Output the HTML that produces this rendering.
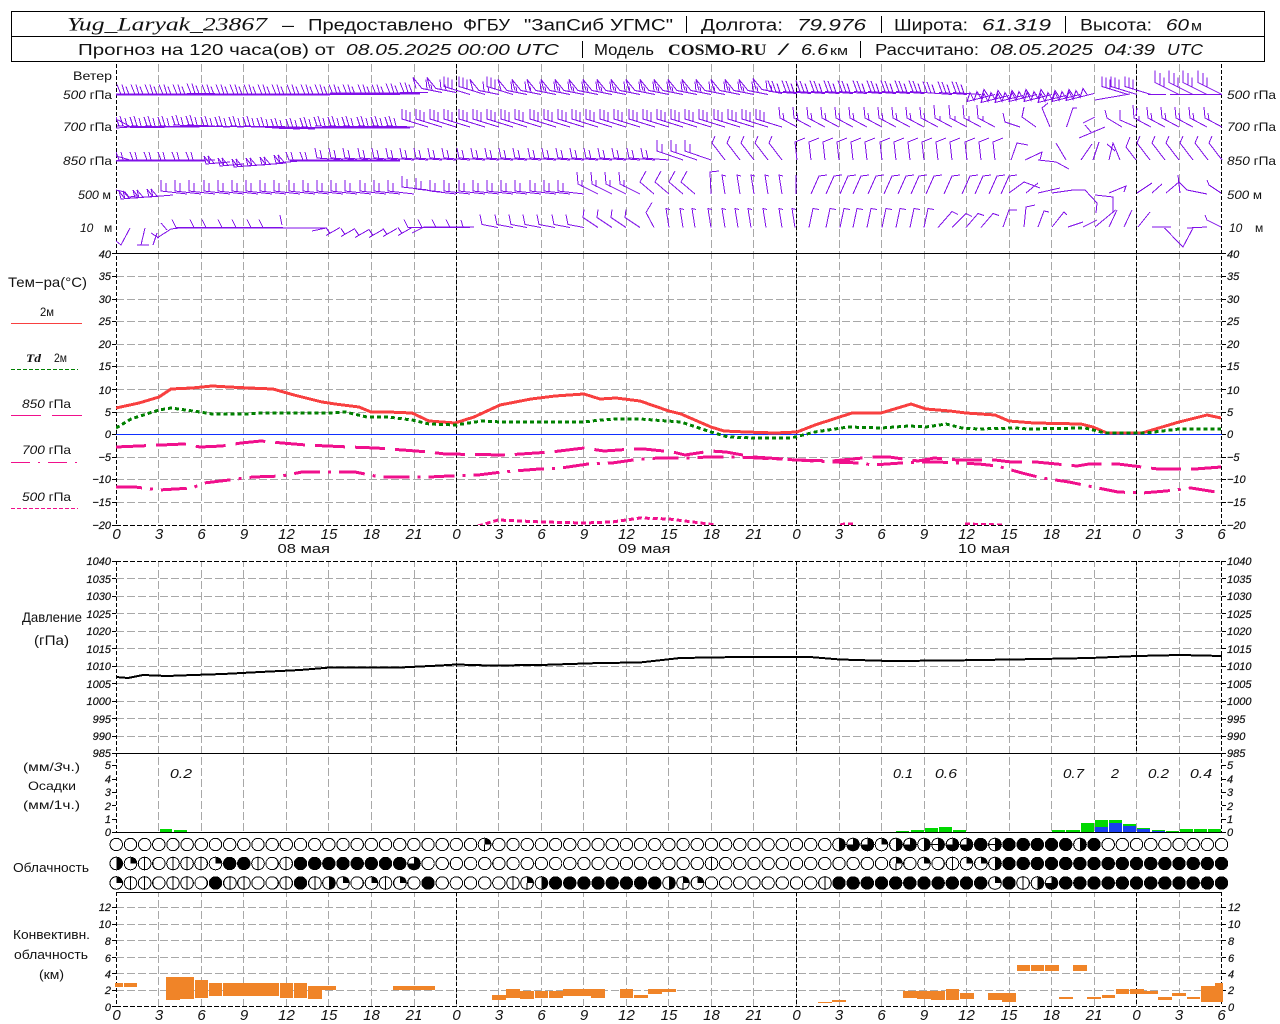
<!DOCTYPE html>
<html><head><meta charset="utf-8"><title>Yug_Laryak_23867</title>
<style>
html,body{margin:0;padding:0;background:#fff}
svg{display:block}
text{font-family:"Liberation Sans",sans-serif;fill:#111}
.i{font-style:italic}
.h1{font-size:17px}
.h2{font-size:16px}
.l{font-size:12px}
.b{font-size:14px}
.c{font-size:13px}
.a{font-size:11px;font-style:italic;text-anchor:end;stroke:#111;stroke-width:.2}
.r{font-size:11px;font-style:italic;stroke:#111;stroke-width:.2}
.x{font-size:15px;font-style:italic;text-anchor:middle;font-family:"Liberation Serif",serif}
.y{font-family:"Liberation Serif",serif;font-style:italic}
</style></head><body>
<svg width="1280" height="1024" viewBox="0 0 1280 1024" xmlns="http://www.w3.org/2000/svg" shape-rendering="crispEdges">
<defs>
<clipPath id="cw"><rect x="116" y="64" width="1107" height="189"/></clipPath>
<clipPath id="ct"><rect x="116" y="254" width="1107" height="271"/></clipPath>
<path id="a" d="M0 0H-28M-24 0l-4-10M-20 0l-3-10M-16 0l-3-8"/>
<path id="B" d="M0 0L-28-2M-25-2l-4-11M-21-1.500l-4-11M-17-1l-3-9"/>
<path id="A" d="M0 0L-28-1M-26-1l-3-9M-22-1l-3-10M-18-1l-2-8"/>
<path id="c" d="M0 0L-26-8v-10M-22-7v-10M-18-6v-9"/>
<path id="C" d="M0 0L-20-4-29-15-26-4M-15-3l-1-10M-10-2l-1-6"/>
<path id="r" d="M0 0L-28 7l3-9 4 8 3-9 4 7 3-9 4 6"/>
<path id="t" d="M0 0L-24-12v-12M-19-9.500v-12M-15-8v-9"/>
<path id="d" d="M0 0L-26-9v-11M-21-7v-9"/>
<path id="e" d="M0 0H-26l-3-8M-22 0l-2-8"/>
<path id="E" d="M0 0L-26-2l-2-10M-21-1l-2-9"/>
<path id="f" d="M0 0L-17-9-18-20M-13-7l-1-7"/>
<path id="F" d="M0 0L-17-9-18-22M-12-6v-5"/>
<path id="g" d="M0 0l-13-17 3-7"/>
<path id="h" d="M0 0l-2-18 10-4"/>
<path id="i" d="M0 0l8-18 8-1"/>
<path id="j" d="M0 0l-16-3-2-10"/>
<path id="J" d="M0 0l-15-10 1-8"/>
<path id="k" d="M0 0l-3-19 4 1"/>
<path id="L" d="M0 0l4-19 6 1"/>
<path id="n" d="M0 0l14-8M4-2l-4-6"/>
<path id="p" d="M0 0L-26-3v-11M-21-2v-9"/>
<path id="q" d="M0 0L-20-10l-1-12M-16-7v-7"/>
<path id="G" d="M0 0l-14-12 6-11"/>
<path id="s" d="M0 0H-20l-4-8"/>
<path id="w" d="M0 0L-24 2l-2-8 6 8-2-8 6 7"/>
<g id="v"><circle r="6.300" fill="#fff" stroke="#000"/><path d="M0-6V6" stroke="#000"/></g>
<g id="H"><circle r="6.300" fill="#fff" stroke="#000"/><path d="M0-6A6 6 0 0 1 0 6Z"/></g>
<g id="Q"><circle r="6.300" fill="#fff" stroke="#000"/><path d="M0 0V-6A6 6 0 0 1 6 0Z"/></g>
<g id="V"><circle r="6.300" fill="#fff" stroke="#000"/><path d="M0 0V-6A6 6 0 0 1 6 0Z"/><path d="M0 0V6" stroke="#000"/></g>
<g id="T"><circle r="6.300" fill="#fff" stroke="#000"/><path d="M0 0V-6A6 6 0 1 1-6 0Z"/></g>
<g id="S"><circle r="6.300" fill="#fff" stroke="#000"/><path d="M0-6A6 6 0 0 1 0 6Z"/><path d="M-6 0H0" stroke="#000"/></g>
</defs>
<rect width="1280" height="1024" fill="#fff"/>

<!-- header -->
<path d="M11.500 11.500H1264.500V61.500H11.500ZM11.500 36.500H1264.500" fill="none" stroke="#000"/>
<g class="h1">
<text x="67" y="30.500" class="y" textLength="200" lengthAdjust="spacingAndGlyphs" style="font-size:19px">Yug_Laryak_23867</text>
<text x="282" y="30.500" textLength="12" lengthAdjust="spacingAndGlyphs">—</text>
<text x="308" y="30.500" textLength="145" lengthAdjust="spacingAndGlyphs">Предоставлено</text>
<text x="463" y="30.500" textLength="47" lengthAdjust="spacingAndGlyphs">ФГБУ</text>
<text x="524" y="30.500" textLength="80" lengthAdjust="spacingAndGlyphs">"ЗапСиб</text>
<text x="610" y="30.500" textLength="63" lengthAdjust="spacingAndGlyphs">УГМС"</text>
<text x="701" y="30.500" textLength="82" lengthAdjust="spacingAndGlyphs">Долгота:</text>
<text x="797" y="30.500" class="i" textLength="69" lengthAdjust="spacingAndGlyphs">79.976</text>
<text x="894" y="30.500" textLength="74" lengthAdjust="spacingAndGlyphs">Широта:</text>
<text x="982" y="30.500" class="i" textLength="69" lengthAdjust="spacingAndGlyphs">61.319</text>
<text x="1080" y="30.500" textLength="72" lengthAdjust="spacingAndGlyphs">Высота:</text>
<text x="1166" y="30.500" class="i" textLength="23" lengthAdjust="spacingAndGlyphs">60</text>
<text x="1191" y="30.500" textLength="11" lengthAdjust="spacingAndGlyphs" style="font-size:14px">м</text>
</g>
<path d="M686.500 16V33M881.500 16V33M1065.500 16V33M582.500 41V58M860.500 41V58" stroke="#000"/>
<g class="h2">
<text x="78" y="55" textLength="257" lengthAdjust="spacingAndGlyphs">Прогноз на 120 часа(ов) от</text>
<text x="346" y="55" class="i" textLength="213" lengthAdjust="spacingAndGlyphs">08.05.2025 00:00 UTC</text>
<text x="594" y="55" textLength="60" lengthAdjust="spacingAndGlyphs">Модель</text>
<text x="668" y="55" textLength="98.500" lengthAdjust="spacingAndGlyphs" style="font-family:'Liberation Serif',serif;font-weight:bold">COSMO-RU</text>
<text x="779" y="55" class="i" textLength="8" lengthAdjust="spacingAndGlyphs">/</text>
<text x="801" y="55" class="i" textLength="27" lengthAdjust="spacingAndGlyphs">6.6</text>
<text x="830" y="55" textLength="18" lengthAdjust="spacingAndGlyphs" style="font-size:13px">км</text>
<text x="875" y="55" textLength="104" lengthAdjust="spacingAndGlyphs">Рассчитано:</text>
<text x="990" y="55" class="i" textLength="103" lengthAdjust="spacingAndGlyphs">08.05.2025</text>
<text x="1104" y="55" class="i" textLength="51" lengthAdjust="spacingAndGlyphs">04:39</text>
<text x="1167" y="55" class="i" textLength="36" lengthAdjust="spacingAndGlyphs">UTC</text>
</g>

<!-- vertical grid -->
<path d="M158.500 64V1006M201.500 64V1006M243.500 64V1006M286.500 64V1006M328.500 64V1006M371.500 64V1006M414.500 64V1006M456.500 64V1006M498.500 64V1006M541.500 64V1006M583.500 64V1006M626.500 64V1006M668.500 64V1006M711.500 64V1006M753.500 64V1006M796.500 64V1006M839.500 64V1006M881.500 64V1006M924.500 64V1006M966.500 64V1006M1009.500 64V1006M1051.500 64V1006M1094.500 64V1006M1136.500 64V1006M1179.500 64V1006" stroke="#a8a8a8" stroke-dasharray="8 3" fill="none"/>
<!-- horizontal grid -->
<path d="M116 276.500H1222M116 299.500H1222M116 321.500H1222M116 344.500H1222M116 366.500H1222M116 389.500H1222M116 412.500H1222M116 457.500H1222M116 479.500H1222M116 502.500H1222M116 578.500H1222M116 596.500H1222M116 613.500H1222M116 631.500H1222M116 648.500H1222M116 666.500H1222M116 683.500H1222M116 701.500H1222M116 718.500H1222M116 736.500H1222M116 907.500H1222M116 924.500H1222M116 940.500H1222M116 957.500H1222M116 973.500H1222M116 990.500H1222" stroke="#a8a8a8" stroke-dasharray="8 3" fill="none"/>
<rect x="100" y="526" width="1140" height="35" fill="#fff"/>
<rect x="100" y="833" width="1140" height="59" fill="#fff"/>
<!-- black dashed axes -->
<path d="M116.500 64V525M116.500 561V832M116.500 892V1006M1221.500 64V525M1221.500 561V832M1221.500 892V1006M456.500 64V525M456.500 561V753M456.500 892V1006M796.500 64V525M796.500 561V753M796.500 892V1006M1136.500 64V525M1136.500 561V753M1136.500 892V1006" stroke="#000" stroke-dasharray="4 2" fill="none"/>
<path d="M116 253.500H1222M116 753.500H1222M116 832.500H1222M116 892.500H1222" stroke="#000" fill="none"/>
<path d="M116 525.500H1222M116 561.500H1222M116 1006.500H1222" stroke="#000" stroke-dasharray="5 2" fill="none"/>
<!-- ticks -->
<path d="M112 253.500h4M112 276.500h4M112 299.500h4M112 321.500h4M112 344.500h4M112 366.500h4M112 389.500h4M112 412.500h4M112 434.500h4M112 457.500h4M112 479.500h4M112 502.500h4M112 525.500h4M112 561.500h4M112 578.500h4M112 596.500h4M112 613.500h4M112 631.500h4M112 648.500h4M112 666.500h4M112 683.500h4M112 701.500h4M112 718.500h4M112 736.500h4M112 753.500h4M112 765.500h4M112 779.500h4M112 792.500h4M112 805.500h4M112 819.500h4M112 832.500h4M112 907.500h4M112 924.500h4M112 940.500h4M112 957.500h4M112 973.500h4M112 990.500h4M112 1006.500h4M1222 253.500h4M1222 276.500h4M1222 299.500h4M1222 321.500h4M1222 344.500h4M1222 366.500h4M1222 389.500h4M1222 412.500h4M1222 434.500h4M1222 457.500h4M1222 479.500h4M1222 502.500h4M1222 525.500h4M1222 561.500h4M1222 578.500h4M1222 596.500h4M1222 613.500h4M1222 631.500h4M1222 648.500h4M1222 666.500h4M1222 683.500h4M1222 701.500h4M1222 718.500h4M1222 736.500h4M1222 753.500h4M1222 765.500h4M1222 779.500h4M1222 792.500h4M1222 805.500h4M1222 819.500h4M1222 832.500h4M1222 907.500h4M1222 924.500h4M1222 940.500h4M1222 957.500h4M1222 973.500h4M1222 990.500h4M1222 1006.500h4" stroke="#000"/>

<!-- wind barbs -->
<g clip-path="url(#cw)" fill="none" stroke="#8010e8">
<path d="M116 94.500H330M330 93.500H420" stroke-width="2"/>
<path d="M130 127.500L200 126.500H270L300 127.500H410M116 160.500H205M290 160.500H400" stroke-width="1.500"/>
<g transform="translate(0,94.500)">
<use href="#a" x="130"/><use href="#a" x="145"/><use href="#a" x="159"/><use href="#a" x="173"/><use href="#a" x="187"/><use href="#a" x="201"/><use href="#a" x="215" y="-1"/><use href="#a" x="230"/><use href="#a" x="244"/><use href="#a" x="258"/><use href="#a" x="272"/><use href="#a" x="286"/><use href="#a" x="300"/><use href="#a" x="315"/><use href="#a" x="329"/><use href="#a" x="343"/><use href="#a" x="357"/><use href="#a" x="371"/><use href="#a" x="386"/><use href="#a" x="400"/><use href="#a" x="414" y="-1"/><use href="#a" x="428" y="-2"/>
<use href="#C" x="442" y="-2"/><use href="#C" x="456" y="-2"/><use href="#c" x="470"/><use href="#c" x="485"/><use href="#C" x="499"/><use href="#c" x="513"/><use href="#C" x="527"/><use href="#C" x="541"/>
<use href="#C" x="556"/><use href="#C" x="570"/><use href="#C" x="584"/><use href="#C" x="598"/><use href="#C" x="612"/><use href="#C" x="626"/><use href="#C" x="640"/><use href="#C" x="655"/><use href="#C" x="669"/><use href="#C" x="683"/><use href="#C" x="697"/><use href="#C" x="711"/><use href="#C" x="725"/><use href="#C" x="740"/><use href="#C" x="754"/><use href="#C" x="768"/><use href="#C" x="782" y="-1"/>
<use href="#B" x="797" y="-1"/><use href="#B" x="811" y="-1"/><use href="#B" x="825" y="-1"/><use href="#B" x="839" y="-1"/><use href="#B" x="853" y="-1"/><use href="#B" x="867" y="-1"/><use href="#B" x="882" y="-1"/><use href="#B" x="896" y="-1"/><use href="#B" x="910" y="-1"/><use href="#B" x="924" y="-1"/><use href="#B" x="938" y="-1"/><use href="#B" x="952"/><use href="#B" x="967"/><use href="#B" x="981"/>
<use href="#r" x="995"/><use href="#r" x="1009" y="1"/><use href="#r" x="1023" y="1"/><use href="#r" x="1037"/><use href="#r" x="1052"/><use href="#r" x="1066" y="1"/><use href="#r" x="1080"/><use href="#r" x="1094" y="-1"/>
<use href="#c" x="1128"/><use href="#c" x="1137"/><use href="#c" x="1151"/>
<use href="#t" x="1179"/><use href="#t" x="1193"/><use href="#t" x="1207"/><use href="#t" x="1222"/>
</g>
<path d="M1095 100L1130 94M1148 94.500H1166M1170 94.500H1222"/>
<g transform="translate(0,127)">
<path d="M116 1l15-1 -13-7"/>
<use href="#A" x="145"/><use href="#A" x="159"/><use href="#A" x="173"/><use href="#A" x="187"/><use href="#A" x="201" y="-1"/><use href="#A" x="215" y="-1"/><use href="#A" x="230"/><use href="#A" x="244"/><use href="#A" x="258"/><use href="#A" x="272"/><use href="#A" x="286" y="1"/><use href="#A" x="300" y="2"/><use href="#A" x="315" y="2"/><use href="#A" x="329" y="1"/><use href="#A" x="343"/><use href="#A" x="357"/><use href="#A" x="371"/><use href="#A" x="386"/><use href="#A" x="400"/><use href="#A" x="414"/>
<use href="#c" x="428"/><use href="#c" x="442"/><use href="#c" x="456"/><use href="#c" x="470"/><use href="#c" x="485"/><use href="#c" x="499"/><use href="#c" x="513"/><use href="#c" x="527"/><use href="#c" x="541"/><use href="#c" x="556"/><use href="#c" x="570"/><use href="#c" x="584"/><use href="#c" x="598"/><use href="#c" x="612"/><use href="#c" x="626"/><use href="#c" x="640"/><use href="#c" x="655"/><use href="#c" x="669"/><use href="#c" x="683"/><use href="#c" x="697"/><use href="#c" x="711"/><use href="#c" x="725"/><use href="#c" x="740"/><use href="#c" x="754"/><use href="#c" x="768"/><use href="#c" x="782"/><use href="#f" x="797"/>
<use href="#f" x="811"/><use href="#f" x="825"/><use href="#f" x="839"/><use href="#f" x="853"/><use href="#f" x="867"/><use href="#f" x="882"/><use href="#f" x="896"/><use href="#f" x="910"/><use href="#f" x="924"/><use href="#f" x="938"/><use href="#F" x="952"/><use href="#F" x="967"/><use href="#F" x="981"/><use href="#F" x="995"/>
<use href="#F" x="1151"/><use href="#f" x="1165"/><use href="#f" x="1179"/><use href="#f" x="1193"/><use href="#f" x="1207"/><use href="#f" x="1222"/>
</g>
<path d="M1003 113l2 9 15 5M1024 107l-2 10 14 10M1048 103l-6 5 8 19M1066.500 127l6.500-19h4M1079 138l26-11M1095 117l-12 6M1091 132l-6-7M1105 110l2 8 15 9M1120 110v10l16 7M1137 108l-1 8"/>
<g transform="translate(0,160)">
<path d="M116 -4l14 4"/>
<use href="#e" x="145"/><use href="#e" x="159"/><use href="#e" x="173"/><use href="#e" x="187"/><use href="#e" x="201"/><use href="#e" x="215"/>
<use href="#w" x="230" y="2"/><use href="#w" x="244" y="4"/><use href="#w" x="258" y="5"/><use href="#w" x="272" y="4"/><use href="#w" x="286" y="3"/><use href="#w" x="300" y="1"/>
<use href="#e" x="315"/><use href="#e" x="329"/>
<use href="#E" x="343"/><use href="#E" x="357"/><use href="#E" x="371"/><use href="#E" x="386"/><use href="#E" x="400"/><use href="#E" x="414"/><use href="#E" x="428"/><use href="#E" x="442"/><use href="#E" x="456"/><use href="#E" x="470"/><use href="#E" x="485"/><use href="#E" x="499"/><use href="#E" x="513"/><use href="#E" x="527"/><use href="#E" x="541"/><use href="#E" x="556"/><use href="#E" x="570"/><use href="#E" x="584"/><use href="#E" x="598"/><use href="#E" x="612"/><use href="#E" x="626"/><use href="#E" x="640"/><use href="#E" x="655"/><use href="#E" x="669"/>
<use href="#d" x="683"/><use href="#d" x="697"/><use href="#d" x="711"/>
<use href="#g" x="725"/><use href="#g" x="740"/><use href="#g" x="754"/><use href="#g" x="768"/><use href="#g" x="782"/>
<use href="#h" x="797"/><use href="#h" x="811"/><use href="#h" x="825"/><use href="#h" x="839"/><use href="#h" x="853"/><use href="#h" x="867"/><use href="#h" x="882"/><use href="#h" x="896"/><use href="#h" x="910"/><use href="#h" x="924"/><use href="#h" x="938"/><use href="#h" x="952"/><use href="#h" x="967"/><use href="#h" x="981"/><use href="#h" x="995"/>
<use href="#g" x="1150"/><use href="#g" x="1165"/><use href="#g" x="1179"/><use href="#g" x="1193"/><use href="#g" x="1208"/><use href="#g" x="1222"/>
</g>
<path d="M1011 160l6-17 11 2M1025 160l17-8 -2 8M1038 160l18 2 13 7M1056 143l10 17M1081 160l11-16M1093 160l6-18M1109 160l4-17 7 17M1107 144l8 7M1136 160l-10-13 4-10"/>
<g transform="translate(0,194)">
<path d="M116-4l9 2 4 5 8-1"/>
<use href="#w" x="145" y="3"/><use href="#w" x="159" y="2"/><use href="#w" x="173" y="1"/>
<use href="#p" x="187"/><use href="#p" x="201"/><use href="#p" x="215"/><use href="#p" x="230"/><use href="#p" x="244"/><use href="#p" x="258"/><use href="#p" x="272"/><use href="#p" x="286"/><use href="#p" x="300"/><use href="#p" x="315"/><use href="#p" x="329"/><use href="#p" x="343"/><use href="#p" x="357"/><use href="#p" x="371"/><use href="#p" x="386"/><use href="#p" x="400"/><use href="#p" x="414"/><use href="#p" x="428" y="-4"/><use href="#p" x="442" y="-2"/><use href="#p" x="456"/><use href="#p" x="470"/><use href="#p" x="485"/><use href="#p" x="499"/><use href="#p" x="513"/><use href="#p" x="527"/><use href="#p" x="541"/><use href="#p" x="556"/><use href="#p" x="570"/><use href="#p" x="584"/>
<use href="#q" x="598"/><use href="#q" x="612"/><use href="#q" x="626"/><use href="#q" x="640"/>
<use href="#G" x="654"/><use href="#G" x="669"/><use href="#G" x="683"/><use href="#G" x="695"/>
<use href="#k" x="725"/><use href="#k" x="740"/><use href="#k" x="754"/><use href="#k" x="768"/><use href="#k" x="782"/>
<use href="#i" x="811"/><use href="#i" x="826"/><use href="#i" x="840"/><use href="#i" x="853"/><use href="#i" x="868"/><use href="#i" x="884"/><use href="#i" x="898"/><use href="#i" x="911"/><use href="#i" x="926"/><use href="#i" x="944"/><use href="#i" x="962"/><use href="#i" x="975"/><use href="#i" x="989"/><use href="#i" x="1001"/>
</g>
<path d="M711 194l-1-22 9-1M796 175v19M1009 193l15-11 16 6M1026 193l12-10M1038 193l22-5M1052 193l21-3h12l12 13-1 10M1095 195l18 2v16M1109 193l17-7-2 6M1137 193l15-10M1152 193l10-9M1166 193l13-11 8 8 20 4M1178 175l2 18M1207 180l2 5 12 8"/>
<g transform="translate(0,227.500)">
<use href="#s" x="196"/><use href="#s" x="214"/><use href="#s" x="226"/><use href="#s" x="242"/><use href="#s" x="256"/><use href="#s" x="271"/><use href="#s" x="283"/>
<use href="#n" x="326" y="8"/><use href="#n" x="341" y="9"/><use href="#n" x="355" y="10"/><use href="#n" x="369" y="10"/><use href="#n" x="383" y="9"/><use href="#n" x="398" y="8"/>
<use href="#s" x="428"/><use href="#s" x="442"/><use href="#s" x="456"/><use href="#s" x="470"/>
<use href="#j" x="498"/><use href="#j" x="513"/><use href="#j" x="527"/><use href="#j" x="541"/><use href="#j" x="555"/><use href="#j" x="570"/><use href="#j" x="584"/>
<use href="#J" x="598"/><use href="#J" x="612"/><use href="#J" x="626"/><use href="#J" x="640"/>
<path d="M654 0l-8-15 6-10"/>
<use href="#k" x="669"/><use href="#k" x="683"/><use href="#k" x="695"/><use href="#k" x="711"/><use href="#k" x="725"/><use href="#k" x="738"/><use href="#k" x="751"/><use href="#k" x="766"/><use href="#k" x="782"/><use href="#k" x="795"/>
<use href="#L" x="809"/><use href="#L" x="826"/><use href="#L" x="840"/><use href="#L" x="853"/><use href="#L" x="867"/><use href="#L" x="882"/><use href="#L" x="896"/><use href="#L" x="910"/><use href="#L" x="924"/>
<path d="M938 0l14-16 6 3M952 0l14-14 6 3M966 0l12-14 6 2M981 0l12-14 6 2"/>
</g>
<path d="M116 241l5 4 9-17M137 245h12M141 245l4-17M151 233l8 5M153 245l4-12M161 223l6 7M157 238l14-9 9-1H326M280 215l2 10M312 231l14-3M412 233l12-6h50M461 220l2 7"/>
<path d="M1003 227l6-17h8M1024 227l2-20 9-2M1038 227l6-16 5 1M1052 227l12-15 3 3M1068 227l15-5M1083 227l14-7M1095 227l20.500-17M1109 227l8-17M1124 227l8-17M1138 227l12-15M1152 227h19M1164.500 228l14.500 15 4 4 10-19M1187 228l20-1M1205 215l2 5 14 7"/>
</g>

<!-- wind labels -->
<g class="l">
<text x="73" y="80" textLength="39" lengthAdjust="spacingAndGlyphs">Ветер</text>
<text x="63" y="99" textLength="49" lengthAdjust="spacingAndGlyphs"><tspan class="i">500</tspan> гПа</text>
<text x="63" y="131" textLength="49" lengthAdjust="spacingAndGlyphs"><tspan class="i">700</tspan> гПа</text>
<text x="63" y="165" textLength="49" lengthAdjust="spacingAndGlyphs"><tspan class="i">850</tspan> гПа</text>
<text x="78" y="199" textLength="33" lengthAdjust="spacingAndGlyphs"><tspan class="i">500</tspan> м</text>
<text x="80" y="232" class="i">10</text><text x="104" y="232">м</text>
<text x="1227" y="99" textLength="49" lengthAdjust="spacingAndGlyphs"><tspan class="i">500</tspan> гПа</text>
<text x="1227" y="131" textLength="49" lengthAdjust="spacingAndGlyphs"><tspan class="i">700</tspan> гПа</text>
<text x="1227" y="165" textLength="49" lengthAdjust="spacingAndGlyphs"><tspan class="i">850</tspan> гПа</text>
<text x="1227" y="199" textLength="35" lengthAdjust="spacingAndGlyphs"><tspan class="i">500</tspan> м</text>
<text x="1229" y="232" class="i">10</text><text x="1255" y="232">м</text>
</g>

<!-- temperature curves -->
<g clip-path="url(#ct)" fill="none">
<path d="M116 434.500H1222" stroke="#1030ff"/>
<path d="M116 408L139 403 159 397 171 389 192 388 212 386 229 387 249 388 273 389 294 395 322 402 335 404 359 407 371 412 388 412 412 413 429 421 455 423 474 417 500 405 531 399 555 396 584 394 600 399 616 398 640 401 669 411 681 414 711 427 724 431 746 432 775 433 797 432 815 425 852 413 881 413 911 404 926 409 950 411 966 413 995 415 1009 421 1034 423 1081 424 1093 427 1107 433 1142 433 1179 422 1207 415 1221 418" stroke="#f84040" stroke-width="3"/>
<path d="M116 428L131 419 159 410 171 408 200 412 212 414 245 414 261 413 331 413 345 412 367 417 388 417 412 420 429 424 456 425 482 421 502 422 543 422 584 422 600 420 616 419 640 419 681 422 711 432 728 437 754 438 791 438 815 432 848 427 881 428 909 426 926 427 946 424 962 428 979 429 1015 428 1028 429 1085 428 1105 433 1146 433 1179 429 1221 429" stroke="#008000" stroke-width="3" stroke-dasharray="4 3"/>
<path d="M116 447L184 444 200 447 222 446 241 443 261 441 282 443 306 445 349 447 376 448 429 452 445 454 506 455 551 452 584 448 604 451 633 449 644 449 673 452 685 455 711 451 726 452 754 457 797 460 832 461 873 457 889 457 918 461 934 458 958 460 995 460 1011 462 1036 462 1077 466 1089 464 1118 464 1134 466 1158 469 1195 469 1221 467" stroke="#f0108c" stroke-width="3" stroke-dasharray="30 10"/>
<path d="M116 487L135 487 159 490 192 488 204 483 229 480 253 477 282 476 302 472 355 472 380 477 429 477 449 476 478 475 502 472 539 469 561 468 588 464 612 463 640 459 660 458 685 458 709 457 738 457 797 460 832 462 860 463 873 465 901 463 922 462 938 462 958 463 979 464 997 466 1022 473 1042 478 1069 482 1093 487 1118 492 1142 493 1166 491 1191 488 1216 492" stroke="#f0108c" stroke-width="3" stroke-dasharray="26 8 3 8"/>
<path d="M478 526L498 520 543 522 584 523 612 522 640 518 669 519 693 522 716 525M840 525L844 524 856 524M965 524L1003 525" stroke="#f0108c" stroke-width="3" stroke-dasharray="5 3"/>
</g>

<!-- temperature labels -->
<text x="8" y="287" class="b" textLength="79" lengthAdjust="spacingAndGlyphs">Тем−ра(°C)</text>
<g class="l">
<text x="40" y="316" textLength="14" lengthAdjust="spacingAndGlyphs">2м</text>
<text x="26" y="362" class="y" font-weight="bold" textLength="15" lengthAdjust="spacingAndGlyphs">Td</text>
<text x="54" y="362" textLength="13" lengthAdjust="spacingAndGlyphs">2м</text>
<text x="22" y="408" textLength="49" lengthAdjust="spacingAndGlyphs"><tspan class="i">850</tspan> гПа</text>
<text x="22" y="454" textLength="49" lengthAdjust="spacingAndGlyphs"><tspan class="i">700</tspan> гПа</text>
<text x="22" y="501" textLength="49" lengthAdjust="spacingAndGlyphs"><tspan class="i">500</tspan> гПа</text>
</g>
<path d="M11 323.500H82" stroke="#f84040" fill="none"/>
<path d="M11 369.500H78" stroke="#008000" stroke-dasharray="4 2" fill="none"/>
<path d="M11 415.500H41M52 415.500H82" stroke="#f0108c" fill="none"/>
<path d="M11 462.500H30M38 462.500h2M48 462.500H67M75 462.500h2" stroke="#f0108c" fill="none"/>
<path d="M11 508.500H78" stroke="#f0108c" stroke-dasharray="4 2" fill="none"/>

<g class="a">
<text x="111" y="258">40</text><text x="111" y="280">35</text><text x="111" y="303">30</text><text x="111" y="325">25</text><text x="111" y="348">20</text><text x="111" y="370">15</text><text x="111" y="394">10</text><text x="111" y="416">5</text><text x="111" y="438">0</text><text x="111" y="461">−5</text><text x="111" y="483">−10</text><text x="111" y="506">−15</text><text x="111" y="529">−20</text>
<text x="111" y="565">1040</text><text x="111" y="583">1035</text><text x="111" y="600">1030</text><text x="111" y="618">1025</text><text x="111" y="635">1020</text><text x="111" y="653">1015</text><text x="111" y="670">1010</text><text x="111" y="688">1005</text><text x="111" y="705">1000</text><text x="111" y="723">995</text><text x="111" y="740">990</text><text x="111" y="757">985</text>
<text x="111" y="769">5</text><text x="111" y="783">4</text><text x="111" y="796">3</text><text x="111" y="810">2</text><text x="111" y="823">1</text><text x="111" y="836">0</text>
<text x="111" y="911">12</text><text x="111" y="928">10</text><text x="111" y="945">8</text><text x="111" y="962">6</text><text x="111" y="978">4</text><text x="111" y="994">2</text><text x="111" y="1011">0</text>
</g>
<g class="r">
<text x="1227" y="258">40</text><text x="1227" y="280">35</text><text x="1227" y="303">30</text><text x="1227" y="325">25</text><text x="1227" y="348">20</text><text x="1227" y="370">15</text><text x="1227" y="394">10</text><text x="1227" y="416">5</text><text x="1227" y="438">0</text><text x="1227" y="461">−5</text><text x="1227" y="483">−10</text><text x="1227" y="506">−15</text><text x="1227" y="529">−20</text>
<text x="1227" y="565">1040</text><text x="1227" y="583">1035</text><text x="1227" y="600">1030</text><text x="1227" y="618">1025</text><text x="1227" y="635">1020</text><text x="1227" y="653">1015</text><text x="1227" y="670">1010</text><text x="1227" y="688">1005</text><text x="1227" y="705">1000</text><text x="1227" y="723">995</text><text x="1227" y="740">990</text><text x="1227" y="757">985</text>
<text x="1227" y="769">5</text><text x="1227" y="783">4</text><text x="1227" y="796">3</text><text x="1227" y="810">2</text><text x="1227" y="823">1</text><text x="1227" y="836">0</text>
<text x="1228" y="911">12</text><text x="1228" y="928">10</text><text x="1228" y="945">8</text><text x="1228" y="962">6</text><text x="1228" y="978">4</text><text x="1228" y="994">2</text><text x="1228" y="1011">0</text>
</g>

<!-- x labels upper -->
<g class="x">
<text x="116.500" y="539">0</text><text x="159" y="539">3</text><text x="201.500" y="539">6</text><text x="244" y="539">9</text><text x="286.500" y="539">12</text><text x="329" y="539">15</text><text x="371.500" y="539">18</text><text x="414" y="539">21</text><text x="456.500" y="539">0</text><text x="499" y="539">3</text><text x="541.500" y="539">6</text><text x="584" y="539">9</text><text x="626.500" y="539">12</text><text x="669" y="539">15</text><text x="711.500" y="539">18</text><text x="754" y="539">21</text><text x="796.500" y="539">0</text><text x="839" y="539">3</text><text x="881.500" y="539">6</text><text x="924" y="539">9</text><text x="966.500" y="539">12</text><text x="1009" y="539">15</text><text x="1051.500" y="539">18</text><text x="1094" y="539">21</text><text x="1136.500" y="539">0</text><text x="1179" y="539">3</text><text x="1221.500" y="539">6</text>
</g>
<text x="277.500" y="553" class="c" textLength="52.500" lengthAdjust="spacingAndGlyphs">08 мая</text>
<text x="618" y="553" class="c" textLength="52.500" lengthAdjust="spacingAndGlyphs">09 мая</text>
<text x="958" y="553" class="c" textLength="52" lengthAdjust="spacingAndGlyphs">10 мая</text>

<!-- pressure -->
<path d="M116 677L128 678 143 675 167 676 193 675 223 674 260 672 300 670 330 667.500 400 667.500 440 665.500 456 664.500 490 665.500 540 665 600 663 640 662.500 680 658 740 657 810 657 840 659.500 890 661 950 660.500 1040 659 1090 658 1137 656 1180 655 1222 656" fill="none" stroke="#000" stroke-width="2"/>
<text x="22" y="622" class="b" textLength="60" lengthAdjust="spacingAndGlyphs">Давление</text>
<text x="34" y="645" class="b" textLength="35" lengthAdjust="spacingAndGlyphs">(гПа)</text>

<!-- precip -->
<g class="l">
<text x="23" y="771" textLength="57" lengthAdjust="spacingAndGlyphs">(мм/<tspan class="i">3</tspan>ч.)</text>
<text x="28" y="790" textLength="48" lengthAdjust="spacingAndGlyphs">Осадки</text>
<text x="23" y="809" textLength="57" lengthAdjust="spacingAndGlyphs">(мм/1ч.)</text>
</g>
<g class="c">
<text x="13" y="872" textLength="76" lengthAdjust="spacingAndGlyphs">Облачность</text>
<text x="13" y="939" textLength="77" lengthAdjust="spacingAndGlyphs">Конвективн.</text>
<text x="14" y="959" textLength="74" lengthAdjust="spacingAndGlyphs">облачность</text>
<text x="39" y="979" textLength="25" lengthAdjust="spacingAndGlyphs">(км)</text>
</g>
<g class="i" style="font-size:13px">
<text x="170" y="778" textLength="22" lengthAdjust="spacingAndGlyphs">0.2</text><text x="893" y="778" textLength="20" lengthAdjust="spacingAndGlyphs">0.1</text><text x="935" y="778" textLength="22" lengthAdjust="spacingAndGlyphs">0.6</text><text x="1063" y="778" textLength="21" lengthAdjust="spacingAndGlyphs">0.7</text><text x="1111" y="778" textLength="8" lengthAdjust="spacingAndGlyphs">2</text><text x="1148" y="778" textLength="21" lengthAdjust="spacingAndGlyphs">0.2</text><text x="1190" y="778" textLength="22" lengthAdjust="spacingAndGlyphs">0.4</text>
</g>
<g fill="#00d800">
<rect x="160" y="829" width="12" height="3"/><rect x="174" y="830" width="13" height="2"/>
<rect x="896" y="831" width="13" height="1"/><rect x="911" y="830" width="13" height="2"/><rect x="925" y="828" width="13" height="4"/><rect x="939" y="827" width="13" height="5"/><rect x="953" y="830" width="13" height="2"/>
<rect x="1052" y="830" width="13" height="2"/><rect x="1066" y="830" width="14" height="2"/><rect x="1081" y="823" width="13" height="9"/><rect x="1095" y="820" width="13" height="12"/><rect x="1109" y="820" width="13" height="12"/><rect x="1123" y="824" width="13" height="8"/><rect x="1137" y="828" width="13" height="4"/><rect x="1152" y="830" width="13" height="2"/><rect x="1166" y="831" width="13" height="1"/><rect x="1180" y="829" width="13" height="3"/><rect x="1194" y="829" width="13" height="3"/><rect x="1208" y="829" width="13" height="3"/>
</g>
<g fill="#1840f0">
<rect x="1095" y="827" width="13" height="5"/><rect x="1109" y="823" width="13" height="9"/><rect x="1123" y="826" width="13" height="6"/><rect x="1137" y="829" width="13" height="3"/><rect x="1152" y="831" width="13" height="1"/>
</g>

<!-- cloud symbols -->
<g fill="none" stroke-linecap="round" stroke-dasharray="0 14.170">
<path d="M116.300 844.500H1225M116.300 863.500H1225M116.300 883H1225" stroke="#000" stroke-width="13.400"/>
<path d="M116.300 844.500H831M1108.200 844.500H1225" stroke="#fff" stroke-width="11.400"/>
<path d="M428.100 863.500H885" stroke="#fff" stroke-width="11.400"/>
<path d="M442.200 883H505" stroke="#fff" stroke-width="11.400"/>
<path d="M711.500 883H818" stroke="#fff" stroke-width="11.400"/>
</g>
<g fill="#fff" stroke="none">
<circle cx="159" cy="863.500" r="5.700"/><circle cx="272" cy="863.500" r="5.700"/><circle cx="910" cy="863.500" r="5.700"/><circle cx="938" cy="863.500" r="5.700"/>
<circle cx="159" cy="883" r="5.700"/><circle cx="201" cy="883" r="5.700"/><circle cx="258" cy="883" r="5.700"/><circle cx="272" cy="883" r="5.700"/><circle cx="357" cy="883" r="5.700"/><circle cx="414" cy="883" r="5.700"/>
</g>
<g>
<use href="#V" x="484.500" y="844.500"/>
<use href="#H" x="839" y="844.500"/><use href="#T" x="853" y="844.500"/><use href="#T" x="867.500" y="844.500"/><use href="#Q" x="881.500" y="844.500"/><use href="#H" x="896" y="844.500"/><use href="#T" x="910" y="844.500"/><use href="#H" x="924" y="844.500"/><use href="#S" x="938" y="844.500"/><use href="#T" x="952.500" y="844.500"/><use href="#T" x="966.500" y="844.500"/><use href="#S" x="995" y="844.500"/><use href="#H" x="1080" y="844.500"/>
<use href="#H" x="116.300" y="863.500"/><use href="#Q" x="130.500" y="863.500"/><use href="#v" x="144.600" y="863.500"/><use href="#v" x="173" y="863.500"/><use href="#v" x="187" y="863.500"/><use href="#v" x="201" y="863.500"/><use href="#Q" x="215.500" y="863.500"/><use href="#v" x="258" y="863.500"/><use href="#v" x="286" y="863.500"/><use href="#T" x="414" y="863.500"/><use href="#v" x="711.500" y="863.500"/>
<use href="#V" x="896" y="863.500"/><use href="#Q" x="924" y="863.500"/><use href="#v" x="952.500" y="863.500"/><use href="#Q" x="966.500" y="863.500"/><use href="#Q" x="981" y="863.500"/><use href="#H" x="995" y="863.500"/>
<use href="#Q" x="116.300" y="883"/><use href="#v" x="130.500" y="883"/><use href="#v" x="144.600" y="883"/><use href="#v" x="173" y="883"/><use href="#v" x="187" y="883"/><use href="#v" x="230" y="883"/><use href="#v" x="244" y="883"/><use href="#v" x="286" y="883"/><use href="#v" x="315" y="883"/><use href="#H" x="329" y="883"/><use href="#Q" x="343" y="883"/><use href="#Q" x="371.500" y="883"/><use href="#v" x="385.500" y="883"/><use href="#Q" x="400" y="883"/>
<use href="#v" x="513" y="883"/><use href="#V" x="527" y="883"/><use href="#H" x="541.500" y="883"/><use href="#H" x="669" y="883"/><use href="#V" x="683" y="883"/><use href="#Q" x="697.500" y="883"/><use href="#v" x="825" y="883"/>
<use href="#Q" x="995" y="883"/><use href="#v" x="1023" y="883"/><use href="#H" x="1037.500" y="883"/><use href="#T" x="1051.500" y="883"/>
</g>

<!-- convective -->
<path fill="#f08428" d="M115 983h8v4h-8zM124 983h13v4h-13zM166 977h14v23h-14zM180 977h14v22h-14zM195 980h13v18h-13zM209 983h13v13h-13zM223 983h56v13h-56zM280 983h13v15h-13zM294 983h13v15h-13zM308 986h14v13h-14zM322 986h14v4h-14zM393 986h42v4h-42zM492 995h14v5h-14zM506 989h14v9h-14zM520 991h14v8h-14zM535 991h13v7h-13zM549 991h14v7h-14zM563 989h28v7h-28zM591 989h14v9h-14zM620 989h13v9h-13zM634 995h14v3h-14zM648 989h14v5h-14zM662 989h14v3h-14zM818 1002h14v1h-14zM832 1000h14v2h-14zM903 991h14v7h-14zM917 991h14v8h-14zM931 991h14v9h-14zM946 989h13v11h-13zM960 993h14v6h-14zM988 993h14v7h-14zM1002 993h14v9h-14zM1017 965h13v6h-13zM1031 965h13v6h-13zM1045 965h14v6h-14zM1059 997h14v2h-14zM1073 965h14v6h-14zM1087 997h14v2h-14zM1102 995h13v3h-13zM1116 989h13v5h-13zM1130 989h14v5h-14zM1144 991h14v3h-14zM1158 997h14v3h-14zM1172 993h14v3h-14zM1187 997h13v2h-13zM1201 986h14v16h-14zM1215 983h8v19h-8z"/>

<!-- x labels lower -->
<g class="x">
<text x="116.500" y="1020">0</text><text x="159" y="1020">3</text><text x="201.500" y="1020">6</text><text x="244" y="1020">9</text><text x="286.500" y="1020">12</text><text x="329" y="1020">15</text><text x="371.500" y="1020">18</text><text x="414" y="1020">21</text><text x="456.500" y="1020">0</text><text x="499" y="1020">3</text><text x="541.500" y="1020">6</text><text x="584" y="1020">9</text><text x="626.500" y="1020">12</text><text x="669" y="1020">15</text><text x="711.500" y="1020">18</text><text x="754" y="1020">21</text><text x="796.500" y="1020">0</text><text x="839" y="1020">3</text><text x="881.500" y="1020">6</text><text x="924" y="1020">9</text><text x="966.500" y="1020">12</text><text x="1009" y="1020">15</text><text x="1051.500" y="1020">18</text><text x="1094" y="1020">21</text><text x="1136.500" y="1020">0</text><text x="1179" y="1020">3</text><text x="1221.500" y="1020">6</text>
</g>
</svg>
</body></html>
